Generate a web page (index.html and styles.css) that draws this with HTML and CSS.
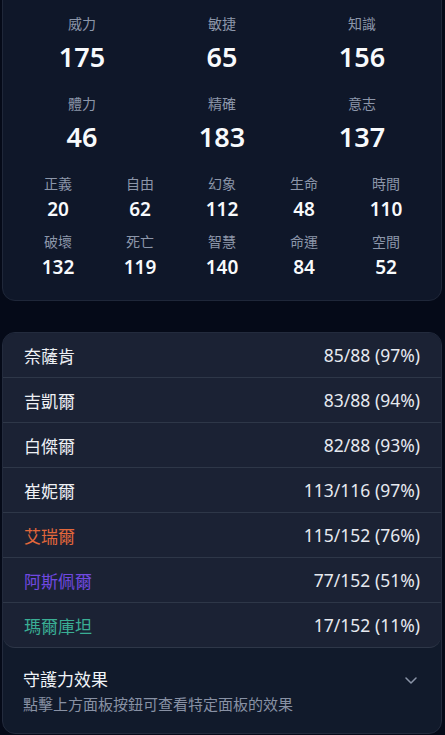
FILE: index.html
```html
<!DOCTYPE html>
<html>
<head>
  <title>Stats</title>
  <link rel="stylesheet" href="styles.css">
</head>
<body>
  <div class="page">
    <section class="stat-card">
      <div class="big-grid">
        <div class="stat"><div class="stat-label">威力</div><div class="stat-value big">175</div></div>
        <div class="stat"><div class="stat-label">敏捷</div><div class="stat-value big">65</div></div>
        <div class="stat"><div class="stat-label">知識</div><div class="stat-value big">156</div></div>
        <div class="stat"><div class="stat-label">體力</div><div class="stat-value big">46</div></div>
        <div class="stat"><div class="stat-label">精確</div><div class="stat-value big">183</div></div>
        <div class="stat"><div class="stat-label">意志</div><div class="stat-value big">137</div></div>
      </div>
      <div class="small-grid">
        <div class="stat"><div class="stat-label">正義</div><div class="stat-value">20</div></div>
        <div class="stat"><div class="stat-label">自由</div><div class="stat-value">62</div></div>
        <div class="stat"><div class="stat-label">幻象</div><div class="stat-value">112</div></div>
        <div class="stat"><div class="stat-label">生命</div><div class="stat-value">48</div></div>
        <div class="stat"><div class="stat-label">時間</div><div class="stat-value">110</div></div>
        <div class="stat"><div class="stat-label">破壞</div><div class="stat-value">132</div></div>
        <div class="stat"><div class="stat-label">死亡</div><div class="stat-value">119</div></div>
        <div class="stat"><div class="stat-label">智慧</div><div class="stat-value">140</div></div>
        <div class="stat"><div class="stat-label">命運</div><div class="stat-value">84</div></div>
        <div class="stat"><div class="stat-label">空間</div><div class="stat-value">52</div></div>
      </div>
    </section>

    <section class="panel">
      <ul class="board-list">
        <li class="board-row"><span class="board-name">奈薩肯</span><span class="board-count">85/88 (97%)</span></li>
        <li class="board-row"><span class="board-name">吉凱爾</span><span class="board-count">83/88 (94%)</span></li>
        <li class="board-row"><span class="board-name">白傑爾</span><span class="board-count">82/88 (93%)</span></li>
        <li class="board-row"><span class="board-name">崔妮爾</span><span class="board-count">113/116 (97%)</span></li>
        <li class="board-row"><span class="board-name orange">艾瑞爾</span><span class="board-count">115/152 (76%)</span></li>
        <li class="board-row"><span class="board-name purple">阿斯佩爾</span><span class="board-count">77/152 (51%)</span></li>
        <li class="board-row"><span class="board-name teal">瑪爾庫坦</span><span class="board-count">17/152 (11%)</span></li>
      </ul>
      <div class="effects">
        <div class="effects-head">
          <span class="effects-title">守護力效果</span>
          <svg class="chevron" width="12" height="7" viewBox="0 0 12 7" fill="none">
            <path d="M1 1l5 5 5-5" stroke="#8a94a7" stroke-width="1.5" stroke-linecap="round" stroke-linejoin="round"/>
          </svg>
        </div>
        <div class="effects-hint">點擊上方面板按鈕可查看特定面板的效果</div>
      </div>
    </section>
  </div>
</body>
</html>
```

FILE: styles.css
```css
body {
  margin: 0;
  background-color: #050a18;
  color: #e5e7eb;
  font-family: "Noto Sans", "Noto Sans CJK TC", sans-serif;
}

.page {
  padding: 0 3px 0 2px;
}

.stat-card {
  margin-top: -14px;
  padding: 27px 9px 20px;
  background-color: #0f1729;
  border: 1px solid #1f2739;
  border-radius: 13px;
}

.big-grid {
  display: grid;
  grid-template-columns: repeat(3, 1fr);
  row-gap: 20px;
}

.small-grid {
  display: grid;
  grid-template-columns: repeat(5, 1fr);
  row-gap: 10px;
  padding: 0 5px;
  margin-top: 20px;
}

.stat {
  text-align: center;
}

.stat-label {
  font-size: 14px;
  line-height: 20px;
  color: #8c96a9;
}

.stat-value {
  margin-top: 2px;
  font-size: 19px;
  line-height: 26px;
  font-weight: 600;
  color: #f8fafc;
}

.stat-value.big {
  margin-top: 6px;
  font-size: 27px;
  line-height: 34px;
}

.panel {
  margin-top: 31px;
  background-color: #111a2b;
  border: 1px solid #232b3d;
  border-radius: 13px;
  overflow: hidden;
}

.board-list {
  list-style: none;
  margin: 0;
  padding: 0;
  background-color: #1b2234;
  border-bottom: 1px solid #2e3748;
  border-radius: 0 0 12px 12px;
}

.board-row {
  display: flex;
  justify-content: space-between;
  align-items: center;
  height: 44px;
  padding: 0 21px;
  font-size: 17px;
  border-bottom: 1px solid #2e3748;
}

.board-row:last-child {
  border-bottom: none;
}

.board-name {
  color: #eef0f4;
}

.board-count {
  font-size: 17.5px;
  color: #e6e9ef;
}

.orange {
  color: #e2673b;
}

.purple {
  color: #7049e0;
}

.teal {
  color: #3aae94;
}

.effects {
  padding: 20px 24px 19px 20px;
}

.effects-head {
  display: flex;
  justify-content: space-between;
  align-items: center;
}

.effects-title {
  font-size: 17px;
  line-height: 24px;
  color: #f1f5f9;
}

.effects-hint {
  margin-top: 2px;
  font-size: 15px;
  line-height: 20px;
  color: #8891a4;
}
```
